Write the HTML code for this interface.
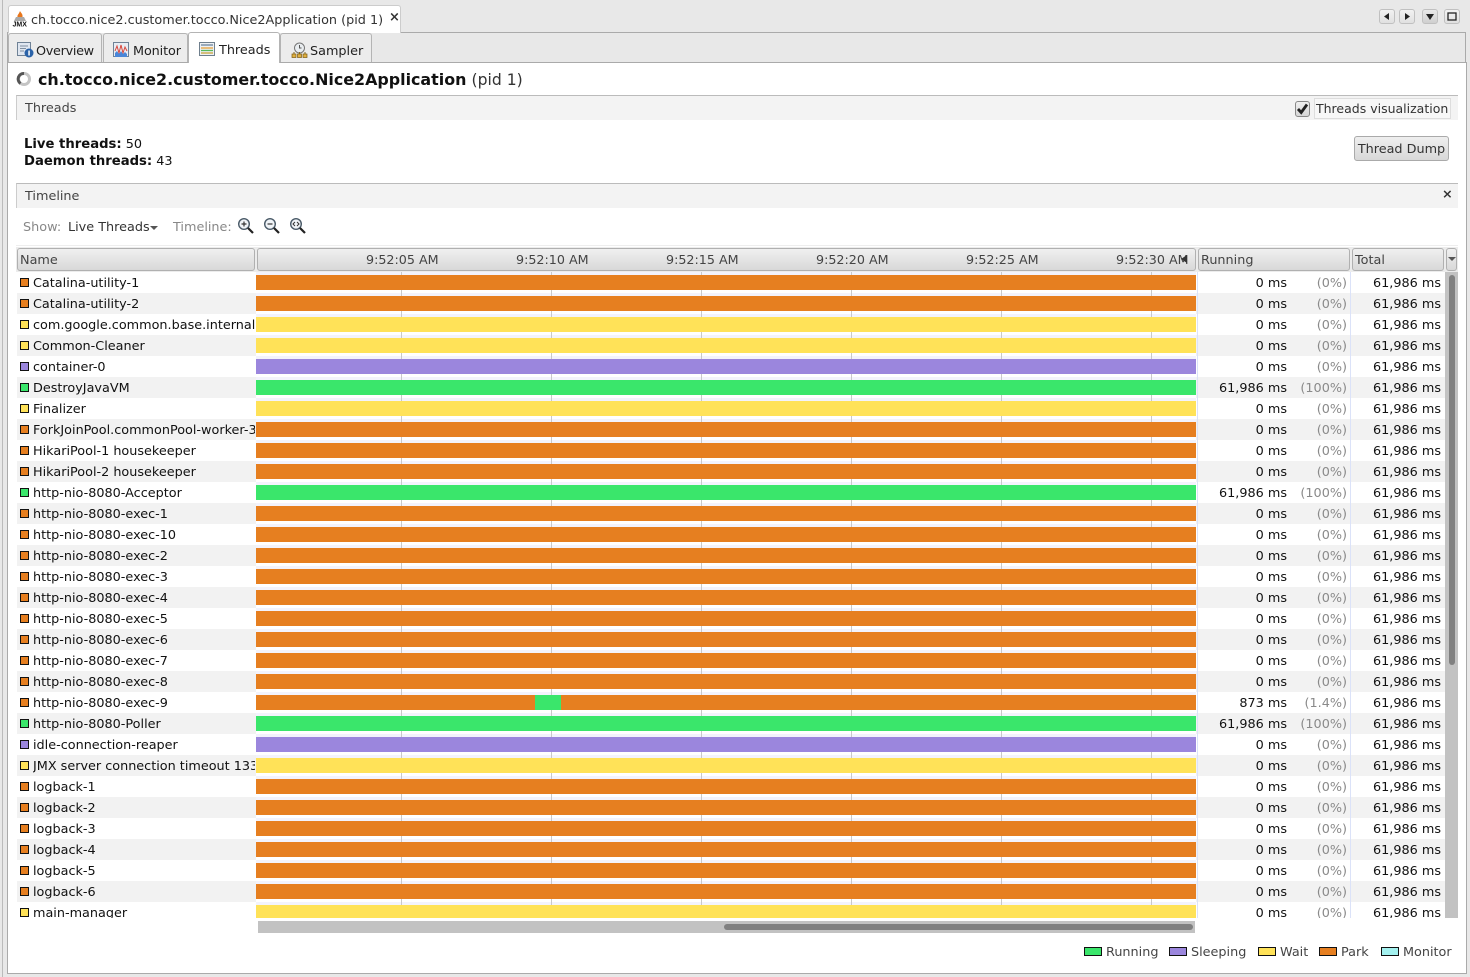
<!DOCTYPE html>
<html><head><meta charset="utf-8"><title>Threads</title>
<style>
html,body{margin:0;padding:0;width:1470px;height:977px;overflow:hidden;background:#e8e8e8;font:12.8px "DejaVu Sans",sans-serif;color:#111}
.a{position:absolute;white-space:nowrap}
#panel{position:absolute;left:7px;top:62px;width:1458px;height:910px;background:#fff;border:1px solid #aaa}
.tab{position:absolute;top:33px;height:29px;background:#ececec;border:1px solid #b4b4b4;border-bottom:0;border-radius:3px 3px 0 0;box-sizing:border-box;line-height:35px;color:#222}
.tab svg{position:absolute;top:8px}
.tab span{position:absolute;top:0}
.sec{position:absolute;left:16px;width:1442px;height:25px;background:#f3f3f3;border-top:1px solid #bbb;border-left:1px solid #ccc;box-sizing:border-box;color:#444}
.h{position:absolute;top:248px;height:23px;box-sizing:border-box;border:1px solid #b0b0b0;border-radius:3px;background:linear-gradient(#f0f0f0,#d8d8d8);line-height:23px;color:#444}
.wb{position:absolute;top:9px;width:16px;height:15px;box-sizing:border-box;border:1px solid #c0c0c0;border-radius:3px;background:linear-gradient(#f2f2f2,#e0e0e0)}
#t{position:absolute;left:17px;top:272px;width:1428px;height:646px;overflow:hidden}
.r{position:relative;height:21px;line-height:23px;background:#fff}
.r:nth-child(even){background:#f2f2f2}
.r i{position:absolute;left:3px;top:6px;width:7px;height:7px;border:1px solid #111}
.r a{position:absolute;left:16px;top:0;width:222px;height:21px;overflow:hidden;white-space:nowrap;color:#111}
.r u{position:absolute;left:239px;top:0;width:940px;height:21px;background:linear-gradient(90deg,transparent 149px,#c9c9c9 149px,#c9c9c9 150px) -4px 0/150px 100% repeat-x,linear-gradient(#f3f3fc 3px,#fff 3px)}
.r u:before{content:"";position:absolute;left:0;top:3px;width:940px;height:15px;background:var(--c)}
.r u b{position:absolute;left:279px;top:3px;width:26px;height:15px;background:#3ae66b}
.r b{position:absolute;font-weight:normal;right:158px;top:0}
.r em{position:absolute;font-style:normal;color:#8a8a8a;right:98px;top:0}
.r span{position:absolute;right:4px;top:0}
.r:before,.r:after{content:"";position:absolute;top:0;width:1px;height:21px;background:#dbe2f8}
.r:before{left:1180px}.r:after{left:1333px}
.p{--c:#e67f20}.w{--c:#ffe258}.s{--c:#9b86dd}.g{--c:#3ae66b}
.p i{background:#e67f20}.w i{background:#ffe258}.s i{background:#9b86dd}.g i{background:#3ae66b}
.l{position:absolute;top:947px;width:16px;height:7px;border:1px solid #111}
.lt{position:absolute;top:945px;color:#444;white-space:nowrap}
.tl{position:absolute;top:252px;color:#444;white-space:nowrap;font-size:12.7px}
.lv b{font-size:13.2px}
</style></head><body>

<div class="a" style="left:0;top:0;width:2px;height:977px;background:#e8e8e8;border-right:1px solid #bbb"></div>
<div class="a" style="left:7px;top:32px;width:1459px;height:1px;background:#aaa"></div>
<div class="a" style="left:1465px;top:32px;width:1px;height:30px;background:#aaa"></div>
<div class="a" style="left:7px;top:32px;width:1px;height:30px;background:#aaa"></div>
<div id="panel"></div>

<!-- document tab -->
<div class="a" style="left:8px;top:5px;width:393px;height:28px;background:#fff;border:1px solid #ccc;border-bottom:0;border-radius:3px 3px 0 0;box-sizing:border-box"></div>
<svg class="a" style="left:12px;top:10px" width="16" height="17" viewBox="0 0 16 17"><path d="M8 1c1 2 3 3 2.500 6H5.500C5 5 7 4 8 1z" fill="#e8761c"/><path d="M4 7h8l2 4H2z" fill="#a9a9a9"/><text x="0.500" y="16.500" font-family="Liberation Sans" font-size="7" font-weight="bold" fill="#111">JMX</text></svg>
<div class="a" style="left:31px;top:13px;color:#333">ch.tocco.nice2.customer.tocco.Nice2Application (pid 1)</div>
<div class="a" style="left:389px;top:10px;font-weight:bold;font-size:13px;color:#333">×</div>

<!-- window buttons -->
<div class="wb" style="left:1379px"><svg width="14" height="13"><path d="M9 3v7L4 6.500z" fill="#222"/></svg></div>
<div class="wb" style="left:1399px"><svg width="14" height="13"><path d="M5 3v7l5-3.500z" fill="#222"/></svg></div>
<div class="wb" style="left:1422px;background:linear-gradient(#e8e8e8,#cfcfcf)"><svg width="14" height="13"><path d="M3 4h8L7 10z" fill="#222"/></svg></div>
<div class="wb" style="left:1444px"><svg width="14" height="13"><rect x="3" y="3" width="8" height="7" fill="none" stroke="#222" stroke-width="1.300"/></svg></div>

<!-- sub tabs -->
<div class="tab" style="left:8px;width:94px"><svg style="left:8px" width="17" height="16" viewBox="0 0 17 16"><rect x=".5" y=".5" width="13" height="13" fill="#dfe6f0" stroke="#6f8296"/><path d="M3 4h8M3 6.500h6M3 9h4" stroke="#7f8fa0"/><circle cx="12" cy="11" r="4.500" fill="#2a62a8"/><rect x="11.300" y="8.500" width="1.500" height="5" fill="#fff"/></svg><span style="left:27px;letter-spacing:-.3px">Overview</span></div>
<div class="tab" style="left:103px;width:85px"><svg style="left:9px" width="17" height="16" viewBox="0 0 17 16"><rect x=".5" y=".5" width="15" height="14" fill="#e8edf4" stroke="#6f8296"/><path d="M2 9l2-5 2 7 2-8 2 8 2-6 2 4" fill="none" stroke="#d8453a"/><path d="M2 11l2-2 2 3 2-3 2 3 2-2 2 2v3H2z" fill="#4a86d8"/></svg><span style="left:29px;letter-spacing:-.1px">Monitor</span></div>
<div class="tab" style="left:188px;width:92px;height:31px;top:32px;background:#fff;line-height:35px"><svg style="left:10px;top:9px" width="17" height="15" viewBox="0 0 17 15"><rect x=".5" y=".5" width="15" height="13" fill="#eef1f4" stroke="#6f7f8d"/><rect x="2" y="2" width="12" height="2" fill="#9ab"/><path d="M2 6h12" stroke="#e6a13a" stroke-width="1.300"/><path d="M2 8.500h12" stroke="#58b85a" stroke-width="1.300"/><path d="M2 11h12" stroke="#c9a23a" stroke-width="1.300"/></svg><span style="left:30px">Threads</span></div>
<div class="tab" style="left:280px;width:92px"><svg style="left:10px" width="17" height="16" viewBox="0 0 17 16"><circle cx="8.500" cy="6" r="5" fill="#e9edf0" stroke="#777"/><path d="M8.500 3v3h2" stroke="#555" fill="none"/><path d="M3 10v2M8.500 10v2M14 10v2" stroke="#8a6a1a"/><rect x="1" y="12" width="4" height="3.500" fill="#e0b040" stroke="#7a5a10" stroke-width=".7"/><rect x="6.500" y="12" width="4" height="3.500" fill="#e0b040" stroke="#7a5a10" stroke-width=".7"/><rect x="12" y="12" width="4" height="3.500" fill="#e0b040" stroke="#7a5a10" stroke-width=".7"/></svg><span style="left:29px">Sampler</span></div>

<!-- title -->
<svg class="a" style="left:16px;top:71px" width="16" height="16" viewBox="0 0 16 16"><circle cx="8" cy="8" r="5.500" fill="none" stroke="#c4c4c4" stroke-width="3"/><path d="M4.500 12.500A5.500 5.500 0 0 1 8 2.500" fill="none" stroke="#555" stroke-width="3"/></svg>
<div class="a" style="left:38px;top:70px;font-size:16px;color:#111"><span style="font-weight:bold;font-size:15.9px">ch.tocco.nice2.customer.tocco.Nice2Application</span> <span style="color:#333;font-size:15.6px">(pid 1)</span></div>

<!-- threads section -->
<div class="sec" style="top:95px"><span class="a" style="left:8px;top:5px">Threads</span></div>
<div class="a" style="left:1295px;top:101px;width:15px;height:16px;box-sizing:border-box;border:1px solid #888;border-radius:3px;background:linear-gradient(#f0f0f0,#d6d6d6)"><svg width="13" height="14" style="display:block"><path d="M2 7l3.200 3.500L11 2.500" fill="none" stroke="#222" stroke-width="2.800"/></svg></div>
<div class="a" style="left:1314px;top:98px;width:137px;height:21px;box-sizing:border-box;border:1px solid #ddd;background:#f7f7f7;line-height:19px;padding-left:1px;color:#333;font-size:12.5px">Threads visualization</div>
<div class="a lv" style="left:24px;top:137px"><b>Live threads:</b> 50</div>
<div class="a lv" style="left:24px;top:154px"><b>Daemon threads:</b> 43</div>
<div class="a" style="left:1354px;top:136px;width:95px;height:25px;box-sizing:border-box;border:1px solid #aaa;border-radius:3px;background:linear-gradient(#efefef,#d8d8d8);text-align:center;line-height:25px;color:#333">Thread Dump</div>

<!-- timeline section -->
<div class="sec" style="top:183px"><span class="a" style="left:8px;top:5px">Timeline</span><span class="a" style="left:1425px;top:3px;font-weight:bold;color:#333">×</span></div>
<div class="a" style="left:23px;top:220px;color:#888">Show:</div>
<div class="a" style="left:68px;top:220px;color:#333">Live Threads</div>
<svg class="a" style="left:150px;top:226px" width="9" height="5"><path d="M0 0h8L4 4z" fill="#555"/></svg>
<div class="a" style="left:173px;top:220px;color:#888">Timeline:</div>
<svg class="a" style="left:237px;top:217px" width="18" height="18" viewBox="0 0 18 18"><circle cx="7" cy="7" r="5.300" fill="#f0f4f8" stroke="#4a5a68" stroke-width="1.400"/><path d="M4.500 7h5M7 4.500v5" stroke="#333" stroke-width="1.200"/><path d="M11 11l5 5" stroke="#222" stroke-width="2.200"/></svg>
<svg class="a" style="left:263px;top:217px" width="18" height="18" viewBox="0 0 18 18"><circle cx="7" cy="7" r="5.300" fill="#f0f4f8" stroke="#4a5a68" stroke-width="1.400"/><path d="M4.500 7h5" stroke="#333" stroke-width="1.200"/><path d="M11 11l5 5" stroke="#222" stroke-width="2.200"/></svg>
<svg class="a" style="left:289px;top:217px" width="18" height="18" viewBox="0 0 18 18"><circle cx="7" cy="7" r="5.300" fill="#f0f4f8" stroke="#4a5a68" stroke-width="1.400"/><path d="M6 5L4 7l2 2M8 5l2 2-2 2" fill="none" stroke="#333"/><path d="M11 11l5 5" stroke="#222" stroke-width="2.200"/></svg>
<div class="a" style="left:16px;top:245px;width:1442px;height:1px;background:#eee"></div>

<!-- table headers -->
<div class="a" style="left:16px;top:247px;width:1442px;height:25px;background:#ececec"></div>
<div class="h" style="left:17px;width:238px;padding-left:2px">Name</div>
<div class="h" style="left:257px;width:939px"></div>
<div class="tl" style="left:366px">9:52:05 AM</div>
<div class="tl" style="left:516px">9:52:10 AM</div>
<div class="tl" style="left:666px">9:52:15 AM</div>
<div class="tl" style="left:816px">9:52:20 AM</div>
<div class="tl" style="left:966px">9:52:25 AM</div>
<div class="tl" style="left:1116px">9:52:30 AM</div>
<svg class="a" style="left:1180px;top:255px" width="9" height="9"><path d="M7 0v8L1 4z" fill="#333"/></svg>
<div class="h" style="left:1198px;width:152px;padding-left:2px">Running</div>
<div class="h" style="left:1352px;width:92px;padding-left:2px">Total</div>
<div class="h" style="left:1446px;width:11px"><svg class="a" style="left:1px;top:8px" width="9" height="5"><path d="M0 0h8L4 4z" fill="#555"/></svg></div>

<!-- rows -->
<div id="t">
<div class="r p"><i></i><a>Catalina-utility-1</a><u></u><b>0 ms</b><em>(0%)</em><span>61,986 ms</span></div>
<div class="r p"><i></i><a>Catalina-utility-2</a><u></u><b>0 ms</b><em>(0%)</em><span>61,986 ms</span></div>
<div class="r w"><i></i><a>com.google.common.base.internal.Finalizer</a><u></u><b>0 ms</b><em>(0%)</em><span>61,986 ms</span></div>
<div class="r w"><i></i><a>Common-Cleaner</a><u></u><b>0 ms</b><em>(0%)</em><span>61,986 ms</span></div>
<div class="r s"><i></i><a>container-0</a><u></u><b>0 ms</b><em>(0%)</em><span>61,986 ms</span></div>
<div class="r g"><i></i><a>DestroyJavaVM</a><u></u><b>61,986 ms</b><em>(100%)</em><span>61,986 ms</span></div>
<div class="r w"><i></i><a>Finalizer</a><u></u><b>0 ms</b><em>(0%)</em><span>61,986 ms</span></div>
<div class="r p"><i></i><a>ForkJoinPool.commonPool-worker-3</a><u></u><b>0 ms</b><em>(0%)</em><span>61,986 ms</span></div>
<div class="r p"><i></i><a>HikariPool-1 housekeeper</a><u></u><b>0 ms</b><em>(0%)</em><span>61,986 ms</span></div>
<div class="r p"><i></i><a>HikariPool-2 housekeeper</a><u></u><b>0 ms</b><em>(0%)</em><span>61,986 ms</span></div>
<div class="r g"><i></i><a>http-nio-8080-Acceptor</a><u></u><b>61,986 ms</b><em>(100%)</em><span>61,986 ms</span></div>
<div class="r p"><i></i><a>http-nio-8080-exec-1</a><u></u><b>0 ms</b><em>(0%)</em><span>61,986 ms</span></div>
<div class="r p"><i></i><a>http-nio-8080-exec-10</a><u></u><b>0 ms</b><em>(0%)</em><span>61,986 ms</span></div>
<div class="r p"><i></i><a>http-nio-8080-exec-2</a><u></u><b>0 ms</b><em>(0%)</em><span>61,986 ms</span></div>
<div class="r p"><i></i><a>http-nio-8080-exec-3</a><u></u><b>0 ms</b><em>(0%)</em><span>61,986 ms</span></div>
<div class="r p"><i></i><a>http-nio-8080-exec-4</a><u></u><b>0 ms</b><em>(0%)</em><span>61,986 ms</span></div>
<div class="r p"><i></i><a>http-nio-8080-exec-5</a><u></u><b>0 ms</b><em>(0%)</em><span>61,986 ms</span></div>
<div class="r p"><i></i><a>http-nio-8080-exec-6</a><u></u><b>0 ms</b><em>(0%)</em><span>61,986 ms</span></div>
<div class="r p"><i></i><a>http-nio-8080-exec-7</a><u></u><b>0 ms</b><em>(0%)</em><span>61,986 ms</span></div>
<div class="r p"><i></i><a>http-nio-8080-exec-8</a><u></u><b>0 ms</b><em>(0%)</em><span>61,986 ms</span></div>
<div class="r p"><i></i><a>http-nio-8080-exec-9</a><u><b style="right:auto"></b></u><b>873 ms</b><em>(1.4%)</em><span>61,986 ms</span></div>
<div class="r g"><i></i><a>http-nio-8080-Poller</a><u></u><b>61,986 ms</b><em>(100%)</em><span>61,986 ms</span></div>
<div class="r s"><i></i><a>idle-connection-reaper</a><u></u><b>0 ms</b><em>(0%)</em><span>61,986 ms</span></div>
<div class="r w"><i></i><a>JMX server connection timeout 133</a><u></u><b>0 ms</b><em>(0%)</em><span>61,986 ms</span></div>
<div class="r p"><i></i><a>logback-1</a><u></u><b>0 ms</b><em>(0%)</em><span>61,986 ms</span></div>
<div class="r p"><i></i><a>logback-2</a><u></u><b>0 ms</b><em>(0%)</em><span>61,986 ms</span></div>
<div class="r p"><i></i><a>logback-3</a><u></u><b>0 ms</b><em>(0%)</em><span>61,986 ms</span></div>
<div class="r p"><i></i><a>logback-4</a><u></u><b>0 ms</b><em>(0%)</em><span>61,986 ms</span></div>
<div class="r p"><i></i><a>logback-5</a><u></u><b>0 ms</b><em>(0%)</em><span>61,986 ms</span></div>
<div class="r p"><i></i><a>logback-6</a><u></u><b>0 ms</b><em>(0%)</em><span>61,986 ms</span></div>
<div class="r w"><i></i><a>main-manager</a><u></u><b>0 ms</b><em>(0%)</em><span>61,986 ms</span></div>
</div>

<!-- scrollbars -->
<div class="a" style="left:1445px;top:272px;width:13px;height:646px;background:#c2c2c2"></div>
<div class="a" style="left:1449px;top:275px;width:6px;height:390px;background:#808080;border-radius:3px"></div>
<div class="a" style="left:258px;top:921px;width:937px;height:12px;background:#c2c2c2"></div>
<div class="a" style="left:724px;top:924px;width:469px;height:6px;background:#808080;border-radius:3px"></div>

<!-- legend -->
<div class="l" style="left:1084px;background:#3ae66b"></div><div class="lt" style="left:1106px">Running</div>
<div class="l" style="left:1169px;background:#9b86dd"></div><div class="lt" style="left:1191px">Sleeping</div>
<div class="l" style="left:1258px;background:#ffe258"></div><div class="lt" style="left:1280px">Wait</div>
<div class="l" style="left:1319px;background:#e67f20"></div><div class="lt" style="left:1341px">Park</div>
<div class="l" style="left:1381px;background:#a3f1ef"></div><div class="lt" style="left:1403px">Monitor</div>
</body></html>
